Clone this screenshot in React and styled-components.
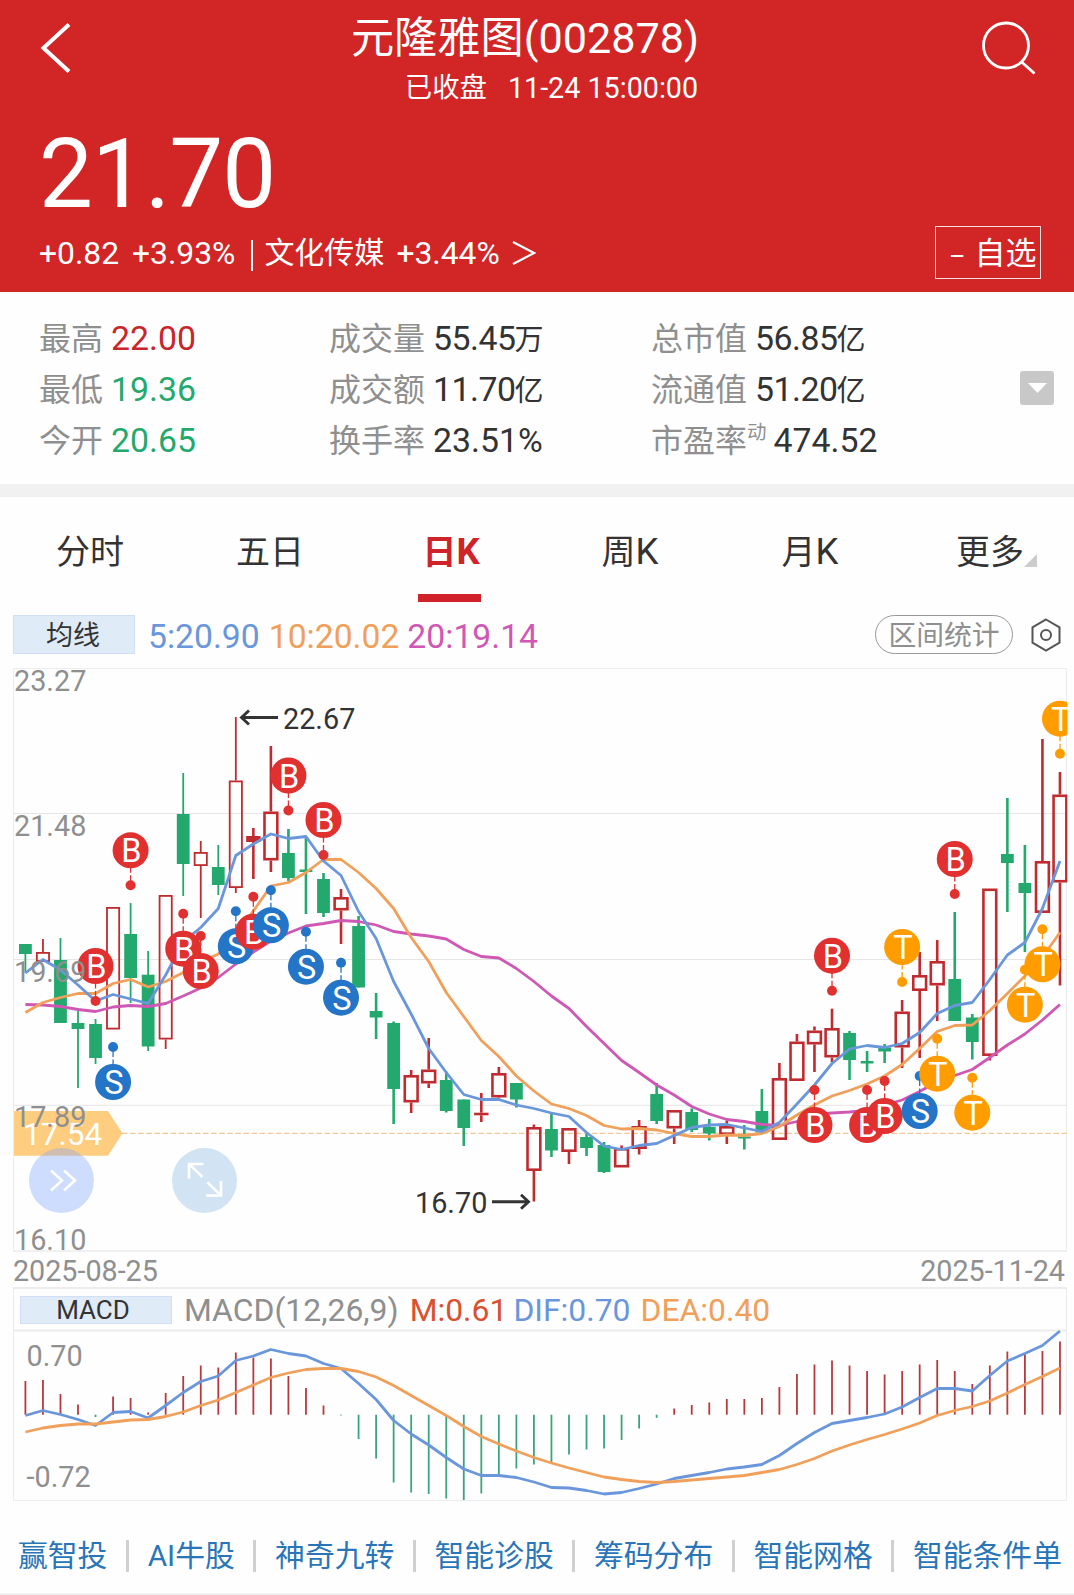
import styled, { createGlobalStyle, css } from "styled-components";

const GlobalStyle = createGlobalStyle`
  * {
    box-sizing: border-box;
  }

  body {
    margin: 0;
    background: #fefefe;
    color: #333;
    font-family: Roboto, "Noto Sans CJK SC", sans-serif;
    -webkit-font-smoothing: antialiased;
  }
`;

const colors = {
  red: "#c9252a",
  green: "#23a96d",
  blue: "#6a96db",
  orange: "#f0a05a",
  pink: "#cf58b4",
  grey: "#8f8f8f",
};

/* ---------- data ---------- */

// [direction, high, body top, body bottom, low] in chart pixels
const candles = [
  ["down", 944, 944, 954, 973],
  ["up", 939, 952, 962, 962],
  ["down", 938, 960, 1023, 1023],
  ["down", 1008, 1023, 1029, 1088],
  ["down", 1019, 1024, 1058, 1064],
  ["up", 907, 907, 1029.5, 1029.5],
  ["down", 903, 934, 978, 1003],
  ["down", 951, 974.7, 1046.5, 1051],
  ["up", 895, 895, 1039.5, 1049],
  ["down", 773, 814, 864, 896],
  ["up", 841, 852, 866, 918],
  ["down", 845, 867, 885, 895],
  ["up", 717, 780.5, 888, 893],
  ["up", 828, 836, 842, 879],
  ["up", 746, 811.5, 860.5, 872],
  ["down", 829, 853, 878, 881],
  ["down", 837, 869.5, 872, 914],
  ["down", 873, 879, 913, 917],
  ["up", 889, 897, 910.5, 944],
  ["down", 916, 926, 987.5, 987.5],
  ["down", 993, 1011, 1017.5, 1039],
  ["down", 1021.5, 1023, 1089, 1124],
  ["up", 1070, 1075, 1102.5, 1113],
  ["up", 1038, 1069.5, 1083.5, 1088],
  ["down", 1071.5, 1080, 1111, 1112.5],
  ["down", 1099.5, 1099.5, 1128, 1146],
  ["up", 1093, 1112.7, 1115.3, 1122],
  ["up", 1067, 1073, 1097.5, 1098.5],
  ["down", 1083, 1083, 1099.5, 1107.5],
  ["up", 1124.5, 1127, 1171, 1201.5],
  ["down", 1113, 1129, 1150.5, 1157],
  ["up", 1128, 1128, 1152, 1164],
  ["down", 1134, 1137, 1148, 1156],
  ["down", 1142, 1145, 1172, 1173],
  ["up", 1145.5, 1148, 1167.5, 1167.5],
  ["up", 1120, 1126, 1149, 1154.5],
  ["down", 1083, 1094, 1121, 1124],
  ["up", 1110, 1110, 1128.5, 1144],
  ["down", 1108.5, 1112, 1130, 1132],
  ["down", 1119, 1127, 1133.5, 1140.5],
  ["up", 1120.5, 1126, 1135, 1144],
  ["down", 1125, 1136.5, 1138.5, 1149.5],
  ["down", 1089, 1111, 1132.5, 1132.5],
  ["up", 1063, 1078, 1140, 1140],
  ["up", 1034, 1041.5, 1081, 1081],
  ["up", 1026.5, 1030.5, 1044.5, 1072],
  ["up", 1008.7, 1028, 1057.5, 1062],
  ["down", 1031, 1033, 1060, 1080],
  ["down", 1051, 1061, 1063.5, 1072],
  ["down", 1044, 1047.5, 1051.5, 1063],
  ["up", 1000, 1011.5, 1047.5, 1068],
  ["up", 952, 975, 991, 1058],
  ["up", 940, 961, 985.5, 1021],
  ["down", 912, 979, 1021, 1021],
  ["down", 1014, 1017.5, 1042, 1059.5],
  ["up", 888.5, 888.5, 1056, 1060.5],
  ["down", 798, 854, 863, 912],
  ["down", 845, 883, 893, 952],
  ["up", 739, 861, 913, 913],
  ["up", 772, 794.5, 882.5, 985.5],
];

const ma5 = [
  973, 959.5, 970, 985, 1001, 994.5, 999, 1003.5, 975, 942, 927.5, 908.5, 855.5,
  844, 834, 838.5, 836.5, 861, 875.5, 911.5, 938.5, 981.5, 1014, 1048.5, 1072.5,
  1094.5, 1099.5, 1099.5, 1105, 1108.5, 1113, 1116.5, 1132.5, 1146, 1149.5,
  1145.5, 1143.5, 1135.5, 1127.5, 1125, 1124.5, 1128, 1131.5, 1122.5, 1104, 1085,
  1063.5, 1049, 1045.5, 1047.5, 1043.5, 1032.5, 1013.5, 1005.5, 1002.5, 979.5,
  955, 942.5, 908.5, 861,
];

const ma10 = [
  1012.5, 1002.5, 997.5, 993.5, 993.5, 983.5, 979.5, 987, 981.5, 972.5, 962, 954,
  935, 911, 886, 882.5, 872.5, 859.5, 859.5, 872.5, 888.5, 908.5, 937.5, 961.5,
  992.5, 1016.5, 1040.5, 1056.5, 1076, 1091, 1104, 1108.5, 1115.5, 1125.5, 1129,
  1128.5, 1130, 1133.5, 1136.5, 1136.5, 1135, 1135.5, 1133.5, 1126.5, 1115, 1105,
  1096, 1090.5, 1084, 1076, 1064.5, 1048.5, 1031.5, 1025.5, 1025, 1010.5, 993.5,
  976, 957, 932.5,
];

const ma20 = [
  1004.5, 1005, 1006.5, 1009.5, 1011.5, 1007, 1005.5, 1006.5, 1003.5, 996, 988,
  977.5, 964, 952, 941, 933, 926, 923.5, 920.5, 921.5, 925, 931.5, 934, 936, 939,
  949.5, 956.5, 958, 968.5, 981.5, 996, 1008.5, 1026.5, 1043.5, 1060.5, 1072.5,
  1085, 1095, 1106.5, 1114, 1119.5, 1121.5, 1124.5, 1125.5, 1121.5, 1114.5, 1113,
  1112, 1110.5, 1105, 1100, 1091.5, 1081.5, 1075.5, 1069.5, 1057.5, 1045, 1034,
  1020, 1004.5,
];

// type, candle index, y of the anchor dot, badge above (-1) or below (1) it
const signals = [
  ["B", 4, 1001, -1],
  ["S", 5, 1047, 1],
  ["B", 6, 885.3, -1],
  ["B", 9, 913.7, 1],
  ["B", 10, 936, 1],
  ["S", 12, 911.3, 1],
  ["B", 13, 896.7, 1],
  ["S", 14, 890.3, 1],
  ["B", 15, 810.5, -1],
  ["S", 16, 931.7, 1],
  ["B", 17, 855, -1],
  ["S", 18, 962.7, 1],
  ["B", 45, 1090, 1],
  ["B", 46, 990.7, -1],
  ["B", 48, 1090, 1],
  ["B", 49, 1081, 1],
  ["T", 50, 982, -1],
  ["S", 51, 1076, 1],
  ["T", 52, 1038.7, 1],
  ["B", 53, 894, -1],
  ["T", 54, 1077.7, 1],
  ["T", 57, 969.7, 1],
  ["T", 58, 929.3, 1],
  ["T", 59, 753.7, -1],
];

const signalColors = { B: "#e03030", S: "#2474c8", T: "#ff9d00" };

const macdBars = [
  1381, 1380, 1394, 1404.5, 1417, 1396.5, 1398, 1412.5, 1393, 1376, 1365.5, 1367.5,
  1352.5, 1357.5, 1358.5, 1376, 1388, 1405.5, 1415.5, 1439, 1458.5, 1482.5, 1492.5,
  1494, 1498.5, 1500, 1493.5, 1476.5, 1468.5, 1464.5, 1462, 1454.5, 1449.5, 1448.5,
  1440, 1428.5, 1417.8, 1408.5, 1405, 1402.5, 1399, 1399, 1398, 1387, 1374, 1364.5,
  1360.5, 1365.5, 1371, 1374.5, 1371, 1364.5, 1360, 1371, 1384, 1365.5, 1351.5,
  1354, 1351, 1341.5,
];

const dif = [
  1415.5, 1410.5, 1414.5, 1419.5, 1425.5, 1412.5, 1411.5, 1418, 1405.5, 1392.5,
  1381.5, 1376, 1360.5, 1356, 1349.5, 1353.5, 1356, 1363.5, 1368.5, 1383.5, 1399.5,
  1420.5, 1434, 1445, 1457.5, 1469, 1475.5, 1475.5, 1477.5, 1482, 1487.5, 1488,
  1490.5, 1494, 1492.5, 1488.5, 1484, 1478.5, 1475.5, 1472.5, 1469, 1467, 1464.5,
  1455.5, 1443.5, 1432.5, 1423.5, 1420.5, 1417.5, 1414, 1407, 1397.5, 1388.5,
  1388.5, 1391, 1375.5, 1361, 1353.5, 1345.5, 1331,
];

const dea = [
  1432, 1428, 1425.5, 1424, 1424, 1422, 1420, 1419.5, 1416.5, 1412, 1405.5, 1400,
  1392.5, 1385, 1377.5, 1373, 1369.5, 1368.5, 1368.5, 1371.5, 1377, 1385.5, 1395.5,
  1405.5, 1415.5, 1426.5, 1436.5, 1444, 1451, 1457.5, 1463, 1468, 1472.5, 1477,
  1479.5, 1481.5, 1482.5, 1481.5, 1480, 1478.5, 1477, 1475.5, 1472.5, 1469.5,
  1464.5, 1458.5, 1451, 1445, 1439.5, 1434.5, 1429, 1423, 1415.5, 1410.5, 1406.5,
  1401, 1393, 1384.5, 1376.5, 1368,
];

const stats = [
  [
    { label: "最高", value: "22.00", color: colors.red },
    { label: "最低", value: "19.36", color: colors.green },
    { label: "今开", value: "20.65", color: colors.green },
  ],
  [
    { label: "成交量", value: "55.45", unit: "万" },
    { label: "成交额", value: "11.70", unit: "亿" },
    { label: "换手率", value: "23.51%" },
  ],
  [
    { label: "总市值", value: "56.85", unit: "亿" },
    { label: "流通值", value: "51.20", unit: "亿" },
    { label: "市盈率", value: "474.52", sup: "动" },
  ],
];

const tabs = [
  { name: "分时" },
  { name: "五日" },
  { name: "日", suffix: "K", active: true },
  { name: "周", suffix: "K" },
  { name: "月", suffix: "K" },
  { name: "更多", more: true },
];

const links = [
  "赢智投",
  "AI牛股",
  "神奇九转",
  "智能诊股",
  "筹码分布",
  "智能网格",
  "智能条件单",
];

/* ---------- helpers ---------- */

const xOf = (i) => 25.4 + i * 17.535;

const toPoints = (values) => values.map((y, i) => `${xOf(i)},${y}`).join(" ");

/* ---------- header ---------- */

const Page = styled.div`
  width: 1074px;
  height: 1595px;
  overflow: hidden;
  border-bottom: 2px solid #f0f0f0;
`;

const Header = styled.header`
  height: 292px;
  background: #d12526;
  color: #fff;
`;

const TopBar = styled.div`
  display: flex;
  justify-content: space-between;
  align-items: flex-start;
  height: 118px;
  padding: 14px 36px 0 38px;
`;

const Titles = styled.div`
  display: flex;
  flex-direction: column;
  align-items: flex-end;
  margin-right: 2px;
`;

const Title = styled.h1`
  margin: 0;
  font-size: 43.2px;
  font-weight: 400;
  line-height: 50px;
`;

const Subtitle = styled.div`
  display: flex;
  gap: 21px;
  margin: 7px 1px 0 0;
  font-size: 28.7px;
  line-height: 34px;
`;

const Status = styled.span`
  font-size: 27.4px;
`;

const Price = styled.div`
  height: 112px;
  padding-left: 39px;
  font-size: 96px;
  line-height: 112px;
  letter-spacing: -1px;
`;

const ChangeRow = styled.div`
  display: flex;
  align-items: center;
  height: 54px;
  margin-top: -4px;
  padding: 0 33px 0 39px;
  font-size: 31.8px;
  line-height: 40px;
`;

const Change = styled.span`
  margin-right: 13px;
`;

const Sector = styled.span`
  display: flex;
  align-items: center;
  gap: 12px;
`;

const SectorName = styled.span`
  font-size: 30px;
  line-height: 42px;
`;

const Divider = styled.span`
  width: 2px;
  height: 31px;
  margin: 4px 11px 0 3px;
  background: #fff;
`;

const WatchButton = styled.button`
  display: flex;
  gap: 9px;
  width: 106px;
  height: 53px;
  margin: -2px 0 0 auto;
  padding: 0 0 0 13px;
  border: 1.5px solid rgba(255, 255, 255, 0.85);
  background: none;
  color: #fff;
  font: inherit;
  font-size: 31px;
  line-height: 54px;
  white-space: nowrap;
`;

const Minus = styled.span`
  font-size: 25px;
  line-height: 60px;
`;

/* ---------- stats ---------- */

const Stats = styled.section`
  display: grid;
  grid-template-columns: 290px 322px 369px 34px;
  align-items: start;
  height: 192px;
  padding: 21px 0 0 39px;
`;

const StatColumn = styled.div`
  display: flex;
  flex-direction: column;
`;

const Stat = styled.div`
  display: flex;
  height: 50.8px;
  font-size: 33.8px;
  line-height: 51px;
`;

const StatLabel = styled.span`
  margin-right: 8px;
  color: ${colors.grey};
  font-size: 32px;
  line-height: 53px;
`;

const StatSup = styled.sup`
  margin: 0 7px 0 -8px;
  color: ${colors.grey};
  font-size: 19.5px;
  line-height: 36px;
`;

const StatValue = styled.span`
  color: ${(props) => props.$color || "#333"};
  letter-spacing: ${(props) => (props.$hasUnit ? "-0.5px" : "normal")};
`;

const Unit = styled.span`
  margin-left: -1px;
  font-size: 29px;
`;

const Expand = styled.button`
  display: grid;
  place-items: center;
  width: 34px;
  height: 34px;
  margin-top: 58px;
  padding: 0;
  border: none;
  border-radius: 3px;
  background: #c8c8c8;
`;

const Band = styled.div`
  height: 13px;
  background: #f1f1f1;
`;

/* ---------- tabs ---------- */

const Tabs = styled.nav`
  display: grid;
  grid-template-columns: repeat(6, 180px);
  height: 105px;
`;

const Tab = styled.a`
  display: flex;
  justify-content: center;
  align-items: flex-end;
  height: 105px;
  padding-bottom: 27px;
  font-size: 34px;
  line-height: 46px;

  ${(props) =>
    props.$active &&
    css`
      width: 63px;
      margin-left: 58px;
      padding: 0 0 19px 3px;
      border-bottom: 8px solid #cf2329;
      color: #cf2329;
      font-weight: 700;
    `}
`;

const Suffix = styled.span`
  font-size: 36.5px;
`;

const Corner = styled.span`
  width: 0;
  height: 0;
  margin: 0 -13px 8px 0;
  border-left: 13px solid transparent;
  border-bottom: 13px solid #ccc;
`;

/* ---------- indicator bar ---------- */

const Indicators = styled.div`
  display: flex;
  align-items: center;
  height: 58px;
  padding: 7px 13px 0;
`;

const Chip = styled.span`
  width: ${(props) => props.$width}px;
  height: ${(props) => props.$height}px;
  padding-right: ${(props) => props.$shift}px;
  border: 1px solid #d0dff3;
  background: #e0ebf8;
  font-size: ${(props) => props.$size}px;
  line-height: ${(props) => props.$line}px;
  text-align: center;
`;

const Reading = styled.span`
  margin: ${(props) => props.$top || 0}px 0 0 ${(props) => props.$gap}px;
  color: ${(props) => props.$color};
  font-size: ${(props) => props.$size || 33.7}px;
  line-height: 40px;
`;

const Pill = styled.button`
  width: 138px;
  height: 39px;
  margin: 0 18px 0 auto;
  padding: 0;
  border: 1.5px solid #999;
  border-radius: 20px;
  background: none;
  color: #8f8f8f;
  font: inherit;
  font-size: 27.8px;
  line-height: 40px;
`;

/* ---------- charts ---------- */

const Chart = styled.svg`
  display: block;
  width: 1074px;
  height: ${(props) => props.$height}px;
  overflow: visible;
  font-family: Roboto, sans-serif;
`;

const Dates = styled.div`
  display: flex;
  justify-content: space-between;
  height: 34px;
  padding: 0 9px 0 13px;
  color: ${colors.grey};
  font-size: 28.7px;
  line-height: 37px;
`;

const MacdBar = styled.div`
  display: flex;
  align-items: center;
  height: 43px;
  margin: 0 7px 0 13px;
  padding: 0 6px;
  border: 1px solid #ececec;
  border-top-width: 2px;
  border-bottom: none;
`;

const Links = styled.nav`
  display: flex;
  align-items: center;
  justify-content: space-between;
  height: 103px;
  padding: 4px 12px 0 18px;
  color: #2a75b8;
  font-size: 29.8px;
  line-height: 40px;
`;

const LinkItem = styled.a`
  white-space: nowrap;
`;

const LinkDivider = styled.span`
  width: 3px;
  height: 32px;
  background: #d0d0d0;
`;

function Candle({ index, data }) {
  const [direction, high, top, bottom, low] = data;
  const x = xOf(index);
  const stroke = index < 13 ? 1.8 : 2.6;

  if (direction === "down")
    return (
      <g fill={colors.green}>
        <rect x={x - stroke / 2} y={high} width={stroke} height={low - high} />
        <rect x={x - 6.4} y={top} width={12.8} height={bottom - top} />
      </g>
    );

  const half = index < 13 ? 7 : 7.7;
  const thin = bottom - top < 7;

  return (
    <g fill="#c02b2f" stroke="none">
      <rect x={x - stroke / 2} y={high} width={stroke} height={top - high} />
      <rect x={x - stroke / 2} y={bottom} width={stroke} height={low - bottom} />
      {thin ? (
        <rect
          x={x - half + 0.5}
          y={top}
          width={half * 2 - 1}
          height={bottom - top}
        />
      ) : (
        <rect
          x={x - half + stroke / 2}
          y={top + stroke / 2}
          width={half * 2 - stroke}
          height={bottom - top - stroke}
          fill="none"
          stroke="#c02b2f"
          strokeWidth={stroke}
        />
      )}
    </g>
  );
}

function Signal({ type, index, y, side }) {
  const x = xOf(index);
  const color = signalColors[type];

  return (
    <g fill={color}>
      <line
        x1={x}
        x2={x}
        y1={y}
        y2={y + side * 18}
        stroke={color}
        strokeWidth="1.3"
        strokeDasharray="10 2.5 6"
      />
      <circle cx={x} cy={y} r="5" />
      <circle cx={x} cy={y + side * 35} r="18" />
      <text
        x={x + 0.8}
        y={y + side * 35 + 12}
        fill="#fff"
        fontSize="32.5"
        textAnchor="middle"
      >
        {type}
      </text>
    </g>
  );
}

function CandleChart() {
  return (
    <Chart $height={593} viewBox="0 660 1074 593">
      <defs>
        <clipPath id="plot">
          <rect x="13" y="660" width="1054.5" height="593" />
        </clipPath>
      </defs>

      <g stroke="#e6e6e6" fill="none">
        <path d="M13.5 1251V668.5H1066.5V1251" stroke="#ececec" />
        <path d="M13 813.5H1067M13 959.5H1067M13 1105.3H1067" />
        <path d="M13 1251H1067" stroke="#f0f0f0" strokeWidth="2" />
      </g>

      <path
        d="M122 1133.3H1067"
        stroke="#f3c896"
        strokeWidth="1.3"
        strokeDasharray="5.5 2.6"
      />
      <path d="M14 1111H108L122.5 1133.3L108 1155.7H14z" fill="#ffcd80" />
      <text x="23" y="1144.5" fill="#fff" fontSize="31.5">
        17.54
      </text>

      <g clipPath="url(#plot)">
        {candles.map((data, i) => (
          <Candle key={i} index={i} data={data} />
        ))}
        <g fill="none" strokeWidth="2.8" strokeLinejoin="round">
          <polyline points={toPoints(ma20)} stroke={colors.pink} />
          <polyline points={toPoints(ma10)} stroke={colors.orange} />
          <polyline points={toPoints(ma5)} stroke={colors.blue} />
        </g>
        {signals.map(([type, index, y, side]) => (
          <Signal key={index} type={type} index={index} y={y} side={side} />
        ))}
      </g>

      <g fill={colors.grey} fontSize="28.8">
        <text x="14" y="691.3">23.27</text>
        <text x="14" y="836.3">21.48</text>
        <text x="14" y="982.3">19.69</text>
        <text x="14" y="1127">17.89</text>
        <text x="14" y="1250.3">16.10</text>
      </g>

      <g fill="#333" fontSize="28.8">
        <text x="283" y="729">22.67</text>
        <text x="415" y="1213">16.70</text>
      </g>
      <g fill="none" stroke="#333" strokeWidth="2.9">
        <path d="M278 717.5H241M249 710.5L241.5 717.5L249 724.5" />
        <path d="M492 1201.7H529M521 1194.7L528.5 1201.7L521 1208.7" />
      </g>

      <circle cx="61.5" cy="1180.5" r="32.5" fill="#7aa0ff" opacity="0.36" />
      <circle cx="204.5" cy="1180.5" r="32.5" fill="#d2e3f3" />
      <g fill="none" stroke="#fff" strokeWidth="2.6">
        <path d="M51 1170.5L62 1180.5L51 1190.5M64 1170.5L75 1180.5L64 1190.5" />
        <path d="M203.5 1164H189V1178.5M189 1164L202.5 1177M206 1195.5H221V1181M221 1195.5L207.5 1182.5" />
      </g>
    </Chart>
  );
}

function MacdChart() {
  return (
    <Chart $height={172} viewBox="0 1330 1074 172">
      <path d="M13.5 1330V1500.5H1066.5V1330" fill="none" stroke="#ececec" />
      <path d="M13 1330.5H1067" stroke="#ececec" strokeWidth="2" />
      {macdBars.map((y, i) => (
        <line
          key={i}
          x1={xOf(i)}
          x2={xOf(i)}
          y1="1414.7"
          y2={y}
          stroke={y > 1414.7 ? "#3aa57a" : "#b9383c"}
          strokeWidth="1.8"
        />
      ))}
      <g fill="none" strokeWidth="2.8" strokeLinejoin="round">
        <polyline points={toPoints(dif)} stroke={colors.blue} />
        <polyline points={toPoints(dea)} stroke={colors.orange} />
      </g>
      <g fill={colors.grey} fontSize="28.8">
        <text x="26.5" y="1365.5">0.70</text>
        <text x="26.5" y="1486.5">-0.72</text>
      </g>
    </Chart>
  );
}

function App() {
  return (
    <>
      <GlobalStyle />
      <Page>
        <Header>
          <TopBar>
            <svg width="34" height="68" viewBox="38 14 34 68">
              <path
                d="M69 24.5L43.5 48L69 71.5"
                fill="none"
                stroke="#fff"
                strokeWidth="4"
              />
            </svg>
            <Titles>
              <Title>元隆雅图(002878)</Title>
              <Subtitle>
                <Status>已收盘</Status>
                <span>11-24 15:00:00</span>
              </Subtitle>
            </Titles>
            <svg width="58" height="68" viewBox="980 14 58 68">
              <g fill="none" stroke="#fff" strokeWidth="2.8">
                <circle cx="1006" cy="45.5" r="22.5" />
                <path d="M1021 61.5L1034.5 73.5" />
              </g>
            </svg>
          </TopBar>
          <Price>21.70</Price>
          <ChangeRow>
            <Change>+0.82</Change>
            <Change>+3.93%</Change>
            <Divider />
            <Sector>
              <SectorName>文化传媒</SectorName>
              <span>+3.44%</span>
              <svg width="24" height="26" viewBox="0 0 24 26">
                <path
                  d="M1 2L22 13L1 24"
                  fill="none"
                  stroke="#fff"
                  strokeWidth="2.2"
                />
              </svg>
            </Sector>
            <WatchButton>
              <Minus>–</Minus>
              <span>自选</span>
            </WatchButton>
          </ChangeRow>
        </Header>

        <Stats>
          {stats.map((column, i) => (
            <StatColumn key={i}>
              {column.map(({ label, value, color, sup, unit }) => (
                <Stat key={label}>
                  <StatLabel>{label}</StatLabel>
                  {sup && <StatSup>{sup}</StatSup>}
                  <StatValue $color={color} $hasUnit={Boolean(unit)}>
                    {value}
                    {unit && <Unit>{unit}</Unit>}
                  </StatValue>
                </Stat>
              ))}
            </StatColumn>
          ))}
          <Expand>
            <svg width="19" height="10" viewBox="0 0 19 10">
              <path d="M0 0H19L9.5 10z" fill="#fff" />
            </svg>
          </Expand>
        </Stats>

        <Band />

        <Tabs>
          {tabs.map(({ name, suffix, active, more }) => (
            <Tab key={name} $active={active}>
              {name}
              {suffix && <Suffix>{suffix}</Suffix>}
              {more && <Corner />}
            </Tab>
          ))}
        </Tabs>

        <Indicators>
          <Chip $width={122} $height={39} $line={41} $size={27} $shift={2}>
            均线
          </Chip>
          <Reading $top={4} $gap={13} $color={colors.blue}>
            5:20.90
          </Reading>
          <Reading $top={4} $gap={9} $color={colors.orange}>
            10:20.02
          </Reading>
          <Reading $top={4} $gap={8} $color={colors.pink}>
            20:19.14
          </Reading>
          <Pill>区间统计</Pill>
          <svg width="30" height="34" viewBox="0 0 30 34">
            <g fill="none" stroke="#555" strokeWidth="2">
              <path d="M15 1.5L28.5 9.3V24.7L15 32.5L1.5 24.7V9.3z" />
              <circle cx="15" cy="17" r="5" />
            </g>
          </svg>
        </Indicators>

        <CandleChart />

        <Dates>
          <span>2025-08-25</span>
          <span>2025-11-24</span>
        </Dates>

        <MacdBar>
          <Chip $width={152} $height={28} $line={27} $size={26} $shift={6}>
            MACD
          </Chip>
          <Reading $top={1} $gap={12} $size={31.9} $color={colors.grey}>
            MACD(12,26,9)
          </Reading>
          <Reading $top={1} $gap={11} $size={31.9} $color="#d9512f">
            M:0.61
          </Reading>
          <Reading $top={1} $gap={6} $size={31.9} $color={colors.blue}>
            DIF:0.70
          </Reading>
          <Reading $top={1} $gap={10} $size={31.9} $color={colors.orange}>
            DEA:0.40
          </Reading>
        </MacdBar>

        <MacdChart />

        <Links>
          {links.flatMap((link, i) => [
            i > 0 && <LinkDivider key={`${link}-divider`} />,
            <LinkItem key={link}>{link}</LinkItem>,
          ])}
        </Links>
      </Page>
    </>
  );
}

export default App;
